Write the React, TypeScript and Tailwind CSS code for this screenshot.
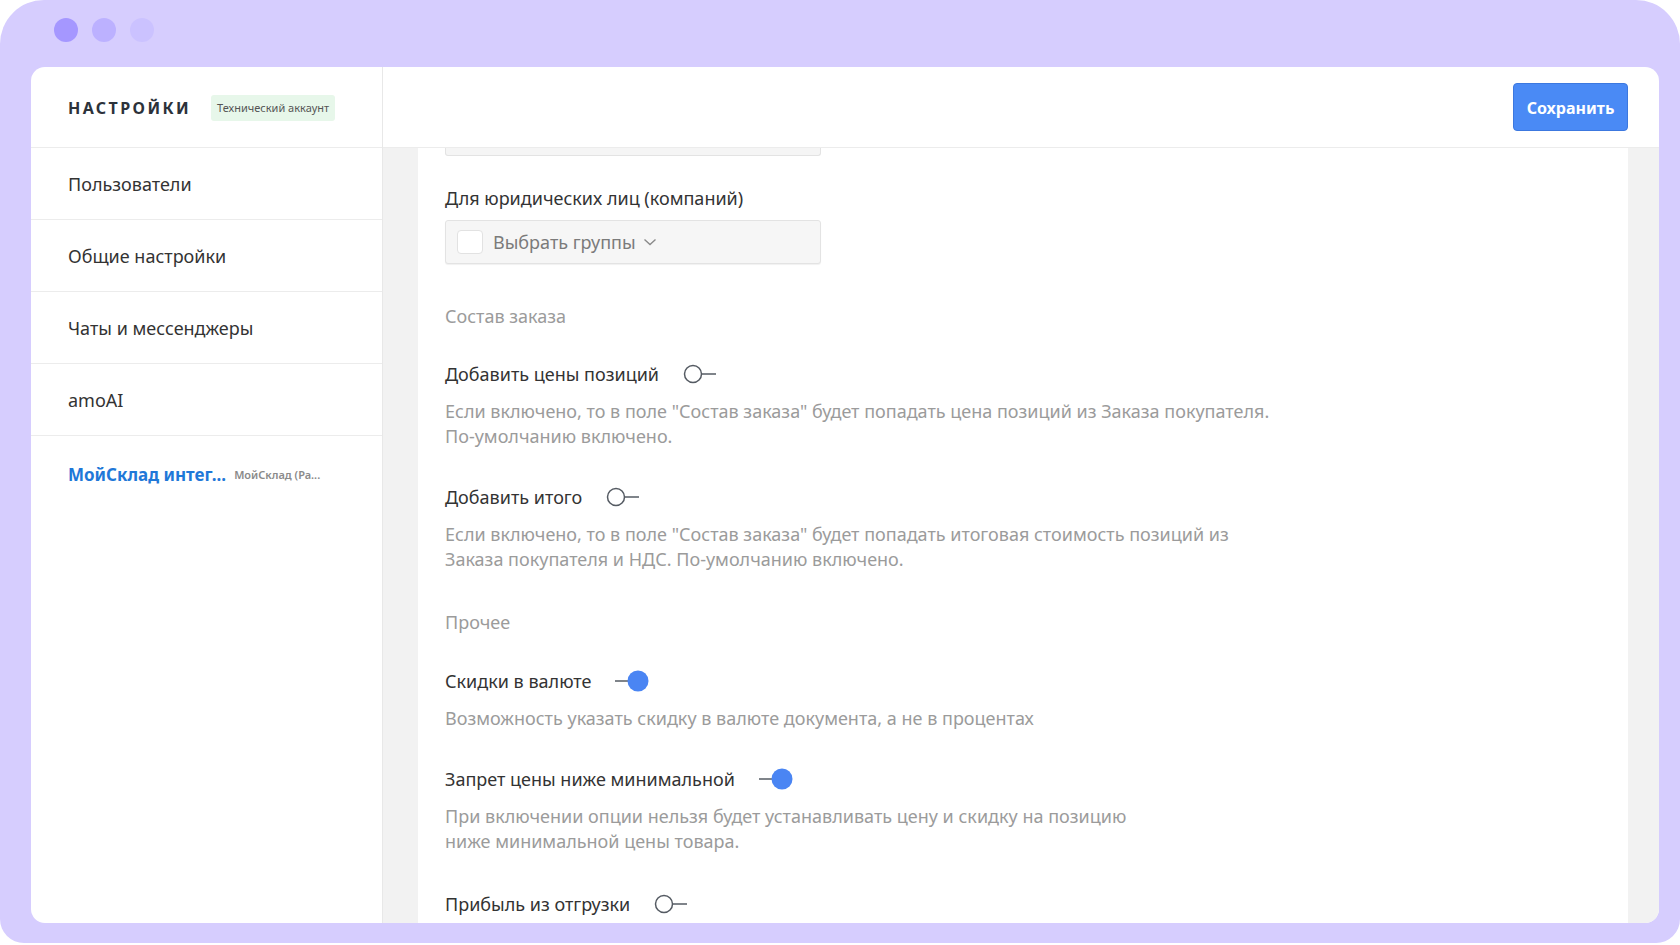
import React from 'react'

const ToggleOff = () => (
  <svg width="34" height="20" viewBox="0 0 34 20" fill="none">
    <circle cx="10" cy="10" r="8.5" stroke="#555b63" strokeWidth="1.5" fill="#fff" />
    <path d="M18.7 10H33" stroke="#555b63" strokeWidth="1.5" />
  </svg>
)

const ToggleOn = () => (
  <svg width="34" height="22" viewBox="0 0 34 22" fill="none">
    <path d="M0 11H13" stroke="#555b63" strokeWidth="1.5" />
    <circle cx="23" cy="11" r="10.5" fill="#4a85f3" />
  </svg>
)

interface SettingProps {
  label: string
  on?: boolean
  lines?: string[]
  gap: string
}

const Setting: React.FC<SettingProps> = ({ label, on, lines, gap }) => {
  return (
    <div className={gap}>
      <div className="flex h-6 items-center gap-6">
        <span className="text-[18px] leading-6 text-[#333]">{label}</span>
        {on ? <ToggleOn /> : <ToggleOff />}
      </div>
      {lines && (
        <div className="mt-[13px] text-[18px] leading-[25px] text-[#9b9b9b]">
          {lines.map((l) => (
            <div key={l}>{l}</div>
          ))}
        </div>
      )}
    </div>
  )
}

const menu = ['Пользователи', 'Общие настройки', 'Чаты и мессенджеры', 'amoAI']

export default function App() {
  return (
    <div className="h-[945px] w-full overflow-hidden bg-white font-['Noto_Sans',sans-serif]">
      <div className="flex h-[943px] flex-col rounded-t-[44px] rounded-b-[24px] bg-[#d6cdfe] pr-[21px] pl-[31px]">
        {/* window dots */}
        <div className="flex h-[67px] shrink-0 items-center gap-[14px] pb-[7px] pl-[23px]">
          <span className="h-6 w-6 rounded-full bg-[#a597ff]" />
          <span className="h-6 w-6 rounded-full bg-[#bcb1ff]" />
          <span className="h-6 w-6 rounded-full bg-[#cbc2ff]" />
        </div>

        <div className="flex h-[856px] overflow-hidden rounded-[14px] bg-white">
          {/* sidebar */}
          <aside className="flex w-[352px] shrink-0 flex-col border-r border-[#e8e8e8]">
            <div className="flex h-[81px] items-center gap-5 border-b border-[#ececec] pt-[2px] pl-[37px]">
              <span className="text-[16px] font-bold tracking-[0.15em] text-[#2c323a]">
                НАСТРОЙКИ
              </span>
              <span className="rounded-[3px] bg-[#e7f7ea] px-[6px] py-[4px] text-[11px] leading-[18px] text-[#555]">
                Технический аккаунт
              </span>
            </div>
            {menu.map((m) => (
              <div
                key={m}
                className="flex h-[72px] items-center border-b border-[#ececec] pt-[2px] pl-[37px] text-[18px] text-[#333]">
                {m}
              </div>
            ))}
            <div className="flex h-[78px] items-center gap-2 pl-[37px]">
              <span className="text-[17px] font-bold text-[#1f78d8]">МойСклад интег...</span>
              <span className="text-[11px] font-semibold text-[#8a8a8a]">МойСклад (Ра...</span>
            </div>
          </aside>

          {/* main */}
          <main className="flex min-w-0 flex-1 flex-col">
            <div className="flex h-[81px] shrink-0 items-center justify-end border-b border-[#ececec] pr-[31px]">
              <button className="h-[48px] w-[115px] rounded-[4px] border border-[#3c78df] bg-[#4a8af5] pt-[2px] text-[16px] font-bold text-white">
                Сохранить
              </button>
            </div>
            <div className="flex flex-1 overflow-hidden bg-[#f2f2f2] pr-[31px] pl-[35px]">
              <div className="flex-1 bg-white pl-[27px]">
                <div className="h-[8px] w-[376px] rounded-b-[3px] border-x border-b border-[#e3e3e3] bg-[#f5f5f5]" />

                <div className="mt-[30px] text-[18px] leading-6 text-[#333]">
                  Для юридических лиц (компаний)
                </div>
                <div className="mt-[10px] flex h-[44px] w-[376px] items-center gap-[10px] rounded-[3px] border border-[#e3e3e3] bg-[#f6f6f6] pl-[11px] shadow-[0_1px_1px_rgba(0,0,0,0.06)]">
                  <span className="h-6 w-[26px] rounded-[4px] border border-[#e2e2e2] bg-white" />
                  <span className="text-[18px] text-[#7b7b7b]">Выбрать группы</span>
                  <svg width="14" height="8" viewBox="0 0 14 8" fill="none" className="ml-[-3px]">
                    <path d="M1.5 1.5L7 6.5L12.5 1.5" stroke="#8a8a8a" strokeWidth="1.4" />
                  </svg>
                </div>

                <div className="mt-[40px] text-[18px] leading-6 text-[#9b9b9b]">Состав заказа</div>

                <Setting
                  gap="mt-[34px]"
                  label="Добавить цены позиций"
                  lines={[
                    'Если включено, то в поле "Состав заказа" будет попадать цена позиций из Заказа покупателя.',
                    'По-умолчанию включено.',
                  ]}
                />
                <Setting
                  gap="mt-[36px]"
                  label="Добавить итого"
                  lines={[
                    'Если включено, то в поле "Состав заказа" будет попадать итоговая стоимость позиций из',
                    'Заказа покупателя и НДС. По-умолчанию включено.',
                  ]}
                />

                <div className="mt-[38px] text-[18px] leading-6 text-[#9b9b9b]">Прочее</div>

                <Setting
                  gap="mt-[35px]"
                  label="Скидки в валюте"
                  on
                  lines={['Возможность указать скидку в валюте документа, а не в процентах']}
                />
                <Setting
                  gap="mt-[36px]"
                  label="Запрет цены ниже минимальной"
                  on
                  lines={[
                    'При включении опции нельзя будет устанавливать цену и скидку на позицию',
                    'ниже минимальной цены товара.',
                  ]}
                />
                <Setting gap="mt-[38px]" label="Прибыль из отгрузки" />
              </div>
            </div>
          </main>
        </div>
      </div>
    </div>
  )
}
